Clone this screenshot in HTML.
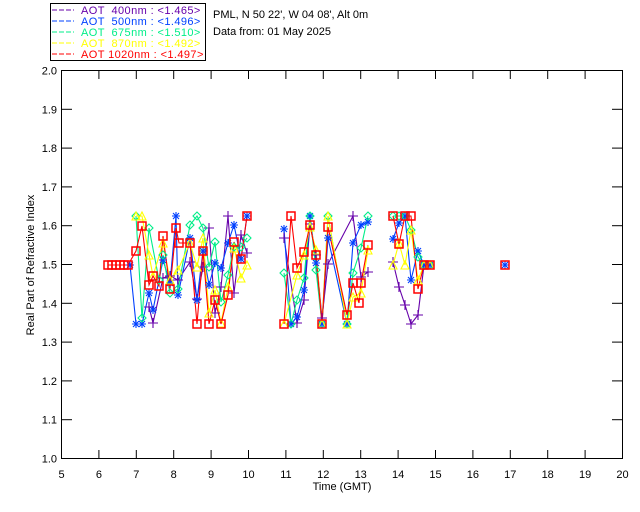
<!DOCTYPE html>
<html><head><meta charset="utf-8"><style>
html,body{margin:0;padding:0;background:#fff;width:640px;height:512px;overflow:hidden}
svg{display:block}
text{font-family:"Liberation Sans",sans-serif;font-size:11px}
</style></head><body>
<svg id="s" width="640" height="512" xmlns="http://www.w3.org/2000/svg">
<rect x="50.5" y="3.5" width="155" height="57" fill="none" stroke="#000"/>
<g font-size="11" letter-spacing="0.4">
<line x1="52" y1="10" x2="74" y2="10" stroke="#6600aa" stroke-dasharray="5,2"/>
<text x="81" y="14" fill="#6600aa" xml:space="preserve">AOT  400nm : &lt;1.465&gt;</text>
<line x1="52" y1="21" x2="74" y2="21" stroke="#0040ff" stroke-dasharray="5,2"/>
<text x="81" y="25" fill="#0040ff" xml:space="preserve">AOT  500nm : &lt;1.496&gt;</text>
<line x1="52" y1="32" x2="74" y2="32" stroke="#00ee88" stroke-dasharray="5,2"/>
<text x="81" y="36" fill="#00ee88" xml:space="preserve">AOT  675nm : &lt;1.510&gt;</text>
<line x1="52" y1="43" x2="74" y2="43" stroke="#ffff00" stroke-dasharray="5,2"/>
<text x="81" y="47" fill="#ffff00" xml:space="preserve">AOT  870nm : &lt;1.492&gt;</text>
<line x1="52" y1="54" x2="74" y2="54" stroke="#ff0000" stroke-dasharray="5,2"/>
<text x="81" y="58" fill="#ff0000" xml:space="preserve">AOT 1020nm : &lt;1.497&gt;</text>
</g>
<text x="213" y="18">PML, N 50 22', W 04 08', Alt 0m</text>
<text x="213" y="35">Data from: 01 May 2025</text>
<rect x="61.5" y="70.5" width="561" height="388" fill="none" stroke="#000"/>
<g id="ax"></g>
<text x="342" y="490" text-anchor="middle">Time (GMT)</text>
<text transform="translate(34,265) rotate(-90)" text-anchor="middle">Real Part of Refractive Index</text>
<g id="d"></g>
</svg>
<script>
var ns="http://www.w3.org/2000/svg";
function el(p,t,a){var e=document.createElementNS(ns,t);for(var k in a)e.setAttribute(k,a[k]);p.appendChild(e);return e;}
var ax=document.getElementById('ax');
for(var h=5;h<=20;h++){var x=61.5+(h-5)*37.4;
 if(h>5&&h<20){el(ax,'line',{x1:x,y1:71,x2:x,y2:79,stroke:'#000'});el(ax,'line',{x1:x,y1:458,x2:x,y2:450,stroke:'#000'});}
 var t=el(ax,'text',{x:x,y:478,'text-anchor':'middle'});t.textContent=h;}
for(var i=0;i<=10;i++){var y=70.5+i*38.8;
 if(i>0&&i<10){el(ax,'line',{x1:62,y1:y,x2:72,y2:y,stroke:'#000'});el(ax,'line',{x1:622,y1:y,x2:612,y2:y,stroke:'#000'});}
 var t=el(ax,'text',{x:57,y:y+4,'text-anchor':'end'});t.textContent=(2-i*0.1).toFixed(1);}
var S={
p:{c:'#6600aa',m:'plus',pts:[[149,307],[153,323],[163,278],[170,276],[178,280],[190,262],[197,299],[203,267],[209,228],[215,313],[221,287],[228,216],[234,293],[241,235],[247,253],[284,238],[297,323],[304,300],[310,224],[316,255],[322,318],[328,264],[353,216],[361,277],[368,272],[393,262],[399,287],[405,305],[411,324],[418,315],[424,265]]},
b:{c:'#0040ff',m:'ast',pts:[[130,265],[136,324],[142,324],[149,293],[153,310],[163,260],[170,283],[176,216],[178,295],[190,238],[197,300],[203,251],[209,285],[215,263],[221,268],[228,243],[234,225],[241,259],[247,216],[284,229],[291,324],[297,317],[304,290],[310,216],[316,263],[322,324],[328,238],[347,324],[353,243],[361,225],[368,222],[393,239],[399,223],[405,216],[411,280],[418,251],[424,265],[430,265],[505,265]]},
g:{c:'#00ee88',m:'dia',pts:[[136,216],[142,318],[149,228],[159,280],[163,255],[170,293],[178,289],[190,225],[197,216],[203,228],[209,267],[215,242],[221,302],[228,275],[234,247],[241,247],[247,238],[284,273],[291,324],[297,300],[304,278],[310,216],[316,270],[322,324],[328,216],[347,324],[353,273],[361,248],[368,216],[393,216],[399,216],[405,216],[411,230],[418,257],[424,265],[430,265]]},
y:{c:'#ffff00',m:'tri',pts:[[136,216],[142,216],[149,255],[153,276],[163,243],[170,280],[178,270],[190,243],[197,267],[203,238],[209,313],[215,290],[221,323],[228,287],[234,248],[241,278],[247,265],[284,324],[297,275],[304,255],[310,227],[316,250],[322,324],[328,216],[347,324],[353,297],[361,293],[368,250],[393,265],[399,243],[405,265],[411,230],[418,280],[424,265],[430,265]]},
r:{c:'#ff0000',m:'sq',pts:[[108,265],[112,265],[116,265],[120,265],[124,265],[128,265],[136,251],[142,226],[149,285],[153,276],[159,286],[163,236],[170,289],[176,228],[179,243],[190,243],[197,324],[203,251],[209,324],[215,300],[221,324],[228,295],[234,242],[241,259],[247,216],[284,324],[291,216],[297,268],[304,252],[310,225],[316,255],[322,324],[328,227],[347,315],[353,283],[359,303],[361,283],[368,245],[393,216],[399,244],[405,216],[411,216],[418,289],[424,265],[430,265],[505,265]]}
};
var d=document.getElementById('d');
function seg(x){return x<260?0:x<380?1:x<440?2:3;}
['p','b','g','y','r'].forEach(function(k){var s=S[k],segs=[[],[],[],[]];
 s.pts.forEach(function(p){segs[seg(p[0])].push(p);});
 segs.forEach(function(a){if(a.length>1)el(d,'polyline',{points:a.map(function(p){return p.join(',')}).join(' '),fill:'none',stroke:s.c,'stroke-width':1.1});});});
['p','b','g','y','r'].forEach(function(k){var s=S[k];
 s.pts.forEach(function(p){var x=p[0],y=p[1],o={fill:'none',stroke:s.c,'stroke-width':1.1};
  if(s.m=='sq'){o.x=x-4;o.y=y-4;o.width=8;o.height=8;o['stroke-width']=1.5;el(d,'rect',o);}
  else if(s.m=='plus'){o.d='M'+(x-5)+' '+y+'h10M'+x+' '+(y-5)+'v10';el(d,'path',o);}
  else if(s.m=='ast'){o.d='M'+(x-4)+' '+y+'h8M'+x+' '+(y-4)+'v8M'+(x-3)+' '+(y-3)+'l6 6M'+(x+3)+' '+(y-3)+'l-6 6';el(d,'path',o);}
  else if(s.m=='dia'){o.d='M'+x+' '+(y-4)+'l4 4-4 4-4-4z';el(d,'path',o);}
  else{o.d='M'+x+' '+(y-4)+'l4 8h-8z';el(d,'path',o);}
 });});
</script>
</body></html>
